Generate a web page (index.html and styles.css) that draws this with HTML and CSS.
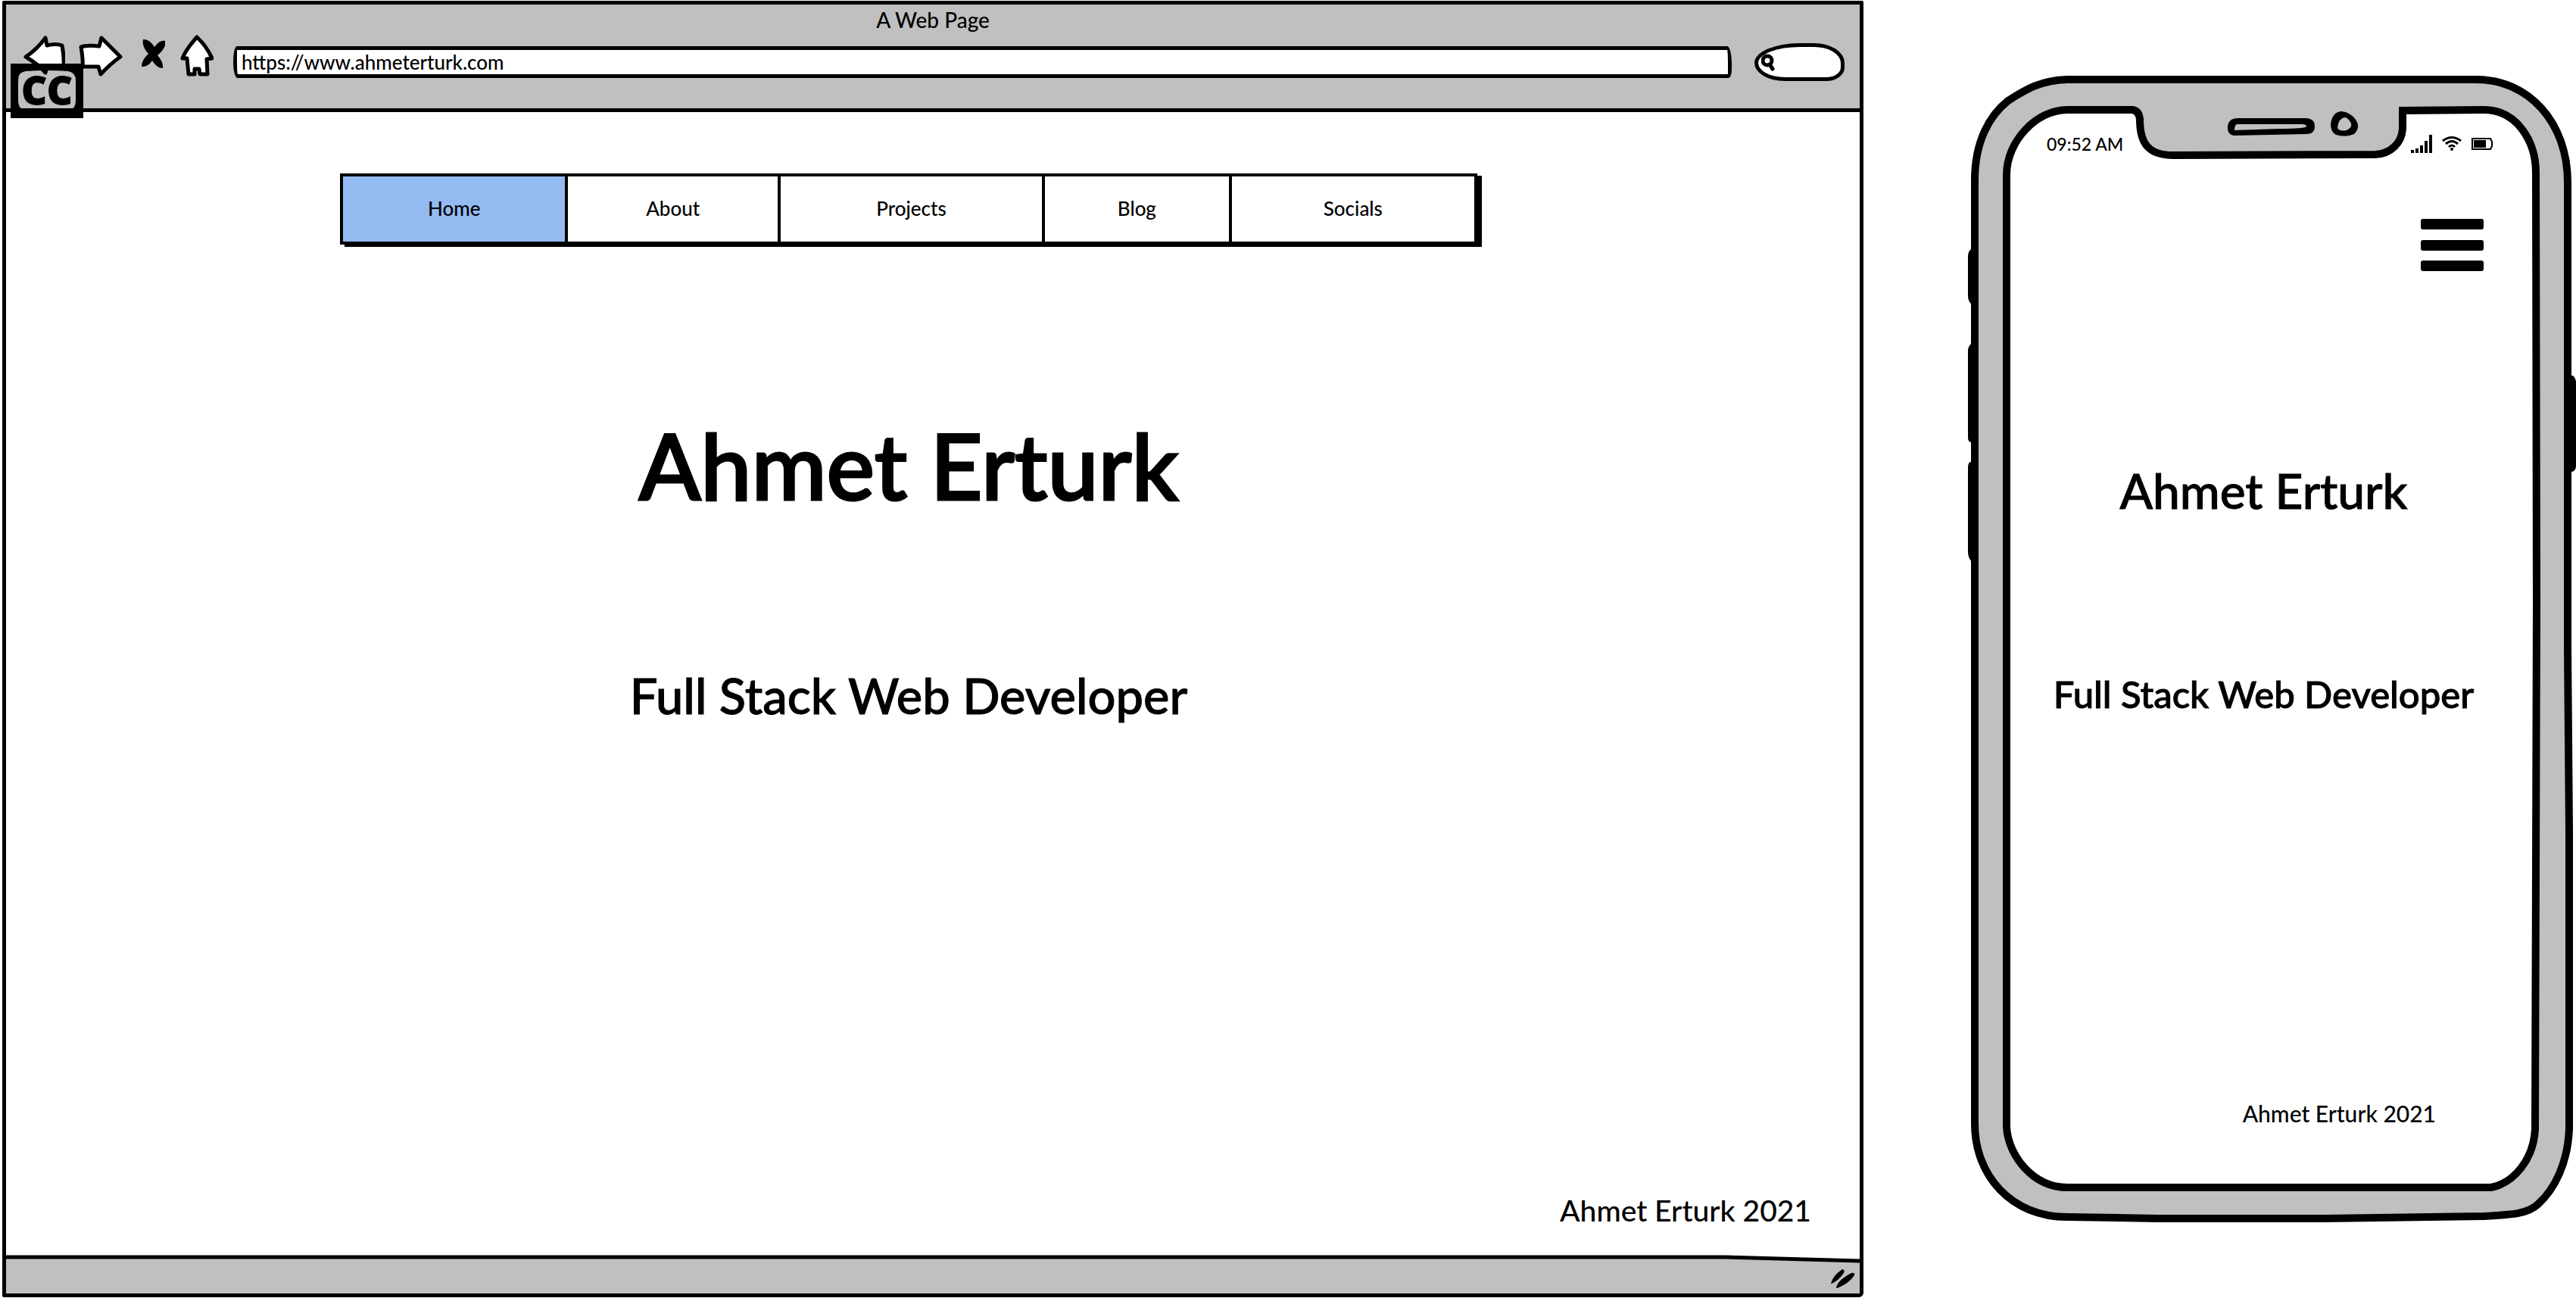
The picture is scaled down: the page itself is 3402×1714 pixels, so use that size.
FILE: index.html
```html
<!DOCTYPE html>
<html lang="en">
<head>
<meta charset="utf-8">
<title>A Web Page</title>
<link rel="stylesheet" href="styles.css">
</head>
<body>
<main class="board">
  <section class="browser" aria-label="Desktop layout">
    <header class="chrome">
      <p class="chrome-title">A Web Page</p>
      <div class="toolbar">
        <button class="tool" type="button" aria-label="Back">
          <svg width="56" height="61" viewBox="30 46 56 61"><path class="arrow" d="M34 75 Q48 66 60 50 L62 60 Q74 57 82 60 Q85 76 84 90 L62 89 L60 96 Q52 86 34 75Z"/></svg>
        </button>
        <button class="tool" type="button" aria-label="Forward">
          <svg width="60" height="61" viewBox="104 46 60 61"><path class="arrow" d="M109 62 Q117 59 133 61 L136 50 L161 75 Q148 84 135 98 L132 88 L111 88 Q112 80 109 62Z"/></svg>
        </button>
        <button class="tool" type="button" aria-label="Stop">
          <svg width="40" height="61" viewBox="179 46 40 61"><path d="M190 52 Q198 51 205 62 Q212 52 220 54 Q220 64 209 73 Q217 82 216 90 Q208 90 202 80 Q196 89 188 88 Q188 79 197 71 Q188 62 190 52Z"/></svg>
        </button>
        <button class="tool" type="button" aria-label="Home">
          <svg width="48" height="61" viewBox="234 46 48 61"><path class="arrow" d="M260 49 Q273 61 280 77 L273 78 L274 98 L264 98 L263 91 L257 91 L257 98 L249 98 L247 77 L241 77 Q245 66 260 49Z"/></svg>
        </button>
        <form class="fields">
          <input class="address" type="text" aria-label="Address" value="https://www.ahmeterturk.com">
          <label class="search">
            <svg width="18" height="24" viewBox="0 0 18 24"><circle cx="8" cy="10" r="6"/><path d="M11 15L15 21"/></svg>
            <input type="text" aria-label="Search">
          </label>
        </form>
      </div>
      <div class="badge">
        <svg width="96" height="72" viewBox="0 0 96 72"><path fill-rule="evenodd" d="M0 0H96V72H0Z M20 10Q10 11 10 22V48Q10 57 15 60H81Q86 57 86 48V22Q86 12 76 10Q48 8 20 10Z"/></svg>
        <span>CC</span>
      </div>
    </header>
    <div class="page">
      <nav class="menu">
        <a class="active" href="#home">Home</a>
        <a href="#about">About</a>
        <a href="#projects">Projects</a>
        <a href="#blog">Blog</a>
        <a href="#socials">Socials</a>
      </nav>
      <h1>Ahmet Erturk</h1>
      <p class="role">Full Stack Web Developer</p>
      <p class="credit">Ahmet Erturk 2021</p>
    </div>
    <div class="statusbar">
      <svg class="rule" viewBox="0 0 2448 16" preserveAspectRatio="none"><path fill="#fff" d="M0 0H2448V8L2270 3H0Z"/><path fill="none" stroke="#000" stroke-width="5" d="M0 3H2270L2448 8"/></svg>
      <svg class="grip" width="32" height="26" viewBox="0 0 32 26"><path d="M0 19Q2 9 15 0Q19 1 17 5Q10 15 1 19Z M7 25Q8 15 27 5Q32 4 31 8Q24 19 8 25Z"/></svg>
    </div>
  </section>

  <section class="phone" aria-label="Phone layout">
    <svg class="device" viewBox="0 0 812 1522" aria-hidden="true">
      <path d="M22 233H13Q9 236 9 243V295Q9 302 14 306H22Z M22 358H13Q9 362 9 367V482Q9 488 14 488H22Z M22 514H12Q9 515 9 522V634Q10 643 14 645H22Z M800 400H808Q812 404 812 409V520Q811 527 806 527H800Z"/>
      <path fill="#c0c0c0" stroke="#000" stroke-width="10" d="M18 142C18 90 38 56 62 37C84 23 104 10 140 9H680C750 9 801 66 801 145V760L803 1000V1395C801 1440 784 1474 762 1494C748 1507 728 1508 690 1510L480 1513H260L140 1511C66 1511 18 1456 18 1388V900Z"/>
      <path fill="#fff" stroke="#000" stroke-width="10" d="M60 135C60 90 100 49 140 49H226Q235 50 236 62C236 94 248 109 280 109L547 108C568 107 582 92 583 74V50L690 49C735 49 759 92 759 132L760 700L758 1395C756 1435 730 1466 700 1472H140C95 1472 62 1430 60 1392V700Z"/>
      <path fill-rule="evenodd" d="M366 60H454Q467 60 467 71Q467 81 456 81L360 83Q351 81 352 71Q353 60 366 60Z M364 68Q361 69 361 76L420 74Q455 74 456 71Q456 68 450 68Z"/>
      <path fill-rule="evenodd" d="M502 51Q514 52 521 62Q528 72 519 81Q508 86 495 82Q488 78 488 68Q490 52 502 51Z M506 59Q498 61 497 73Q500 78 509 76Q517 72 515 67Q511 59 506 59Z"/>
    </svg>
    <div class="screen">
      <div class="signals">
        <span>09:52 AM</span>
        <svg width="109" height="24" viewBox="0 0 109 24">
          <path d="M0 20h4v4h-4z M6 18h4v6h-4z M12 14h4v10h-4z M18 8h4v16h-4z M24 0h4v24h-4z"/>
          <path fill="none" stroke="#000" stroke-width="3" d="M42 8Q54 -1 66 8 M46 12Q54 5 62 12 M50 16Q54 12 58 16"/><circle cx="54" cy="19" r="2"/>
          <path fill="none" stroke="#000" stroke-width="2" d="M81 5H105L107 9V15L105 19H81Z"/><path d="M83 7h16v10h-16z"/>
        </svg>
      </div>
      <button class="burger" type="button" aria-label="Open menu">
        <svg width="83" height="69" viewBox="0 0 83 69"><rect width="83" height="14" rx="3"/><rect y="28" width="83" height="14" rx="3"/><rect y="55" width="83" height="14" rx="3"/></svg>
      </button>
      <h2>Ahmet Erturk</h2>
      <p class="role">Full Stack Web Developer</p>
      <p class="credit">Ahmet Erturk 2021</p>
    </div>
  </section>
</main>
</body>
</html>
```
FILE: styles.css
```css
* {
  box-sizing: border-box;
}

body {
  margin: 0;
  background: #fff;
  color: #000;
  font-family: Lato, "Liberation Sans", sans-serif;
  font-weight: 500;
}

h1, h2, p {
  margin: 0;
  font-weight: 500;
}

button {
  padding: 0;
  border: 0;
  background: none;
  cursor: pointer;
}

svg {
  display: block;
}

.board {
  display: grid;
  grid-template-columns: 2458fr 812fr;
  column-gap: 129px;
  align-items: start;
  min-height: 100vh;
  padding: 1px 0 1px 3px;
}

/* Desktop browser window */
.browser {
  display: flex;
  flex-direction: column;
  align-self: stretch;
  border: 5px solid #000;
  border-radius: 2px 2px 6px 2px;
}

.chrome {
  position: relative;
  padding-bottom: 36px;
  border-bottom: 5px solid #000;
  background: #c0c0c0;
}

.chrome-title {
  font-size: 28px;
  line-height: 40px;
  text-align: center;
}

.toolbar {
  display: flex;
  gap: 16px;
  padding: 0 20px 0 22px;
}

.tool {
  flex: none;
}

.arrow {
  fill: #fff;
  stroke: #000;
  stroke-width: 5;
  stroke-linejoin: round;
}

.fields {
  display: flex;
  flex: 1;
  align-items: center;
  align-self: flex-end;
  gap: 30px;
  height: 50px;
  padding-left: 10px;
}

.address {
  flex: 1;
  min-width: 0;
  height: 42px;
  padding: 0 6px;
  border: 5px solid #000;
  border-radius: 5px 6px 4px 6px / 20px 24px 12px 20px;
  background: #fff;
  color: #000;
  font: inherit;
  font-size: 26px;
}

.search {
  display: flex;
  align-items: center;
  width: 119px;
  height: 50px;
  padding-left: 4px;
  border: 5px solid #000;
  border-radius: 60px 40px 24px 40px / 26px 26px 18px 24px;
  background: #fff;
}

.search svg {
  flex: none;
  fill: none;
  stroke: #000;
  stroke-width: 5;
  stroke-linecap: round;
}

.search input {
  min-width: 0;
  flex: 1;
  border: 0;
  background: none;
  outline: 0;
}

.badge {
  position: absolute;
  top: 78px;
  left: 6px;
}

.badge span {
  position: absolute;
  inset: 0;
  font-family: "Open Sans", "Liberation Sans", sans-serif;
  font-size: 52px;
  font-weight: 800;
  line-height: 68px;
  text-align: center;
  -webkit-text-stroke: 1px #000;
}

.page {
  display: flex;
  flex: 1;
  flex-direction: column;
  align-items: center;
  padding: 81px 64px 35px 0;
}

.menu {
  display: grid;
  grid-template-columns: 295fr 282fr 351fr 248fr 326fr;
  width: 63%;
  height: 94px;
  border: 4px solid #000;
  box-shadow: 6px 3px 0 #000;
}

.menu a {
  border-left: 4px solid #000;
  color: inherit;
  font-size: 26px;
  line-height: 84px;
  text-align: center;
  text-decoration: none;
}

.menu .active {
  border-left: 0;
  background: #94baf2;
}

h1 {
  margin-top: 219px;
  font-size: 120px;
  line-height: 144px;
  -webkit-text-stroke: 3px #000;
}

.role,
h2 {
  -webkit-text-stroke: 1px #000;
}

.browser .role {
  margin-top: 194px;
  font-size: 65px;
  line-height: 76px;
}

.browser .credit {
  align-self: flex-end;
  margin-top: auto;
  font-size: 39px;
  line-height: 48px;
}

.statusbar {
  position: relative;
  height: 51px;
  background: #c0c0c0;
}

.rule {
  width: 100%;
  height: 16px;
}

.grip {
  position: absolute;
  right: 6px;
  bottom: 6px;
}

/* Phone */
.phone {
  display: grid;
  margin-top: 95px;
}

.device,
.screen {
  grid-area: 1 / 1;
}

.device {
  width: 100%;
}

.screen {
  z-index: 1;
  display: flex;
  flex-direction: column;
  align-items: center;
  padding: 80px 78px 130px 65px;
}

.signals {
  display: flex;
  align-items: center;
  align-self: stretch;
  justify-content: space-between;
  padding: 0 31px 0 48px;
  font-size: 23px;
  line-height: 28px;
}

.burger {
  align-self: flex-end;
  margin: 85px 44px 0 0;
}

h2 {
  margin-top: 252px;
  font-size: 64px;
  line-height: 76px;
}

.phone .role {
  margin-top: 201px;
  font-size: 49px;
  line-height: 58px;
}

.phone .credit {
  align-self: flex-end;
  margin: auto 107px 0 0;
  font-size: 30px;
  line-height: 36px;
}
```
